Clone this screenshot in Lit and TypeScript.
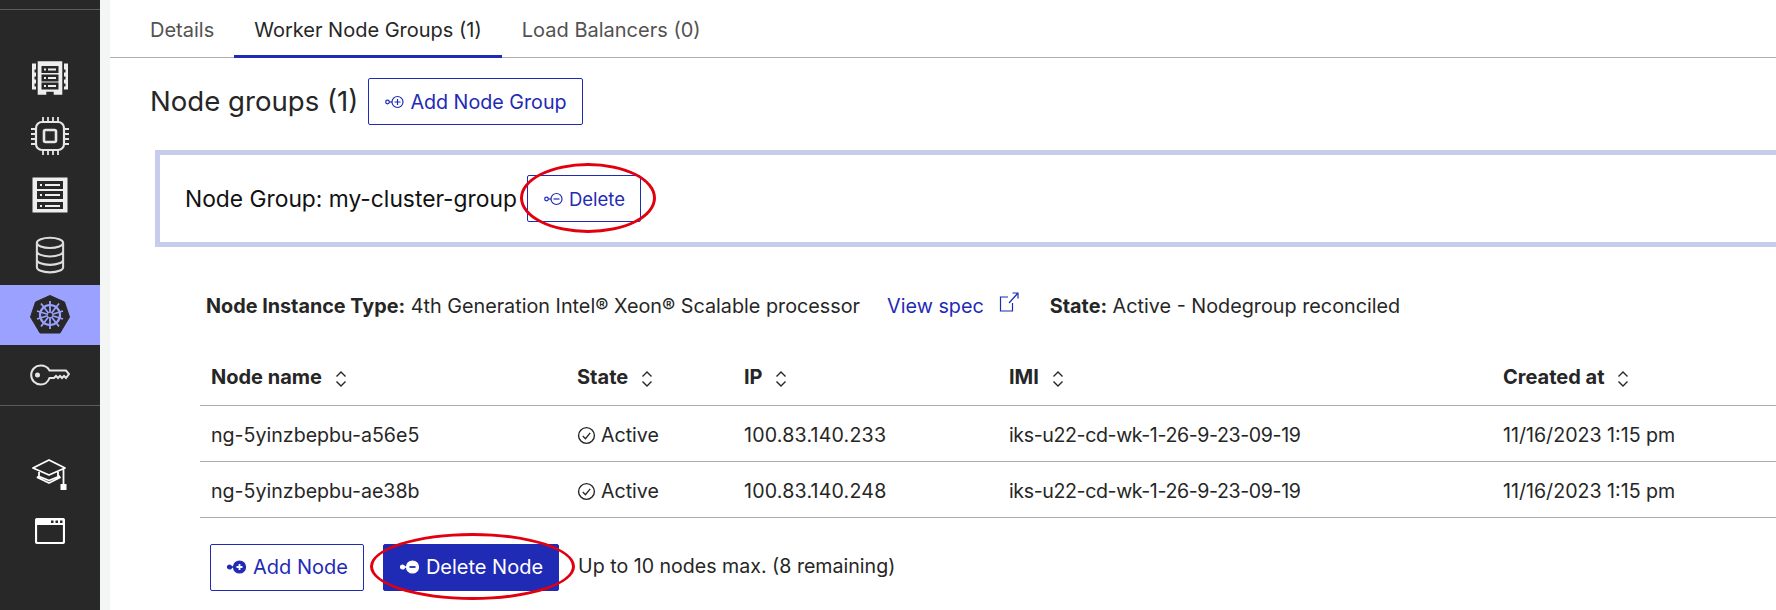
import { LitElement, html, css, svg } from 'lit';
import { customElement } from 'lit/decorators.js';

const sortIcon = html`<svg class="sort" viewBox="0 0 12 18" width="12" height="18" fill="none" stroke="currentColor" stroke-width="1.4">
	<path d="M1.500 6.500 6 2l4.500 4.500M1.500 11.500 6 16l4.500-4.500" />
</svg>`;

const nodeIcon = (sign: 'plus' | 'minus', solid = false) => html`<svg class="node-icon" viewBox="0 0 20 14" width="20" height="14" fill="none" stroke="currentColor" stroke-width="1.2">
	${solid
		? svg`<circle cx="2.5" cy="7" r="2" fill="currentColor" /><path d="M4 7h3" stroke-width="1.6" />
			<circle cx="12.5" cy="7" r="6" fill="currentColor" />
			<path d="M9.5 7h6${sign === 'plus' ? 'M12.5 4v6' : ''}" stroke="${sign === 'plus' ? '#fff' : '#1f2bb5'}" stroke-width="1.8" />`
		: svg`<circle cx="2.5" cy="7" r="1.8" /><path d="M4.3 7h2.7" />
			<circle cx="12.5" cy="7" r="5.5" />
			<path d="M9.5 7h6${sign === 'plus' ? 'M12.5 4v6' : ''}" />`}
</svg>`;

const rackIcon = html`<svg viewBox="0 0 36 34" width="36" height="34" fill="none" stroke="#eee">
	<path d="M0 2.500h4v6H2.500v3H4v4H2.500v3H4v4H2.500v3H4v3H0zM32 2.500h4v26h-4v-3h1.500v-3H32v-4h1.500v-3H32v-4h1.500v-3H32z" fill="#eee" stroke="none" />
	<path d="M7 1.500h22v31h-6v-3H13v3H7z" stroke-width="2.600" fill="#eee" />
	<path d="M9.500 5h17v7h-17zM9.500 13.500h17v7h-17zM9.500 21.500h17v7h-17z" fill="#282828" stroke="none" />
	<path d="M12 8.500h2M16 8.500h8M12 17h2M16 17h8M12 25h2M16 25h8" stroke-width="2" />
</svg>`;

const chipIcon = html`<svg viewBox="0 0 40 40" width="40" height="40" fill="none" stroke="#e6e6e6" stroke-width="1.8">
	<rect x="6" y="6" width="28" height="28" rx="6" stroke-width="2.2" />
	<rect x="14" y="14" width="12" height="12" rx="1.5" stroke-width="2.6" />
	<path d="M13 1v5M18 1v5M23 1v5M28 1v5M13 34v5M18 34v5M23 34v5M28 34v5M1 13h5M1 18h5M1 23h5M1 28h5M34 13h5M34 18h5M34 23h5M34 28h5" />
</svg>`;

const serverIcon = html`<svg viewBox="0 0 36 36" width="36" height="36" fill="#eee">
	<rect x="0.5" y="0.5" width="35" height="35" />
	<g fill="#282828">
		<rect x="5" y="4" width="26" height="8" />
		<rect x="5" y="14" width="26" height="8" />
		<rect x="5" y="25" width="26" height="7" />
	</g>
	<path d="M8 7h2v2H8zM13 7h15v2H13zM8 17h2v2H8zM13 17h15v2H13zM8 28h2v2H8zM13 28h15v2H13z" />
</svg>`;

const dbIcon = html`<svg viewBox="0 0 32 40" width="30" height="38" fill="none" stroke="#ddd" stroke-width="2.2">
	<ellipse cx="16" cy="7" rx="14" ry="5.5" />
	<path d="M2 7v26c0 3 6 5.500 14 5.500S30 36 30 33V7M2 16c0 3 6 5.500 14 5.500S30 19 30 16M2 25c0 3 6 5.500 14 5.500S30 28 30 25" />
</svg>`;

const kubeIcon = html`<svg viewBox="0 0 40 40" width="40" height="40">
	<path d="M20 0.500 34.500 7 39.500 22 30 38H10L0.500 22 5.500 7z" fill="#282828" stroke="#282828" stroke-linejoin="round" stroke-width="1" />
	<g fill="none" stroke="#9aa1ff" stroke-width="1.8">
		<circle cx="20" cy="20" r="10" stroke-width="2.2" />
		<path d="M20 6v28M7 16l26 8M33 16 7 24M11 8.500l18 23M29 8.500l-18 23" />
	</g>
	<circle cx="20" cy="20" r="2.2" fill="#282828" />
</svg>`;

const keyIcon = html`<svg viewBox="0 0 40 22" width="40" height="22" fill="none" stroke="#e6e6e6" stroke-width="2">
	<path d="M19.500 6.500H36l3 3.500-3 4-2-2-2 2-2-2-2 2-2-2-2 2h-4.500C18 18 14.500 20.500 10.500 20.500 5.500 20.500 1.200 16.500 1.200 11S5.500 1.500 10.500 1.500c4 0 7.500 2 9 5z" />
	<circle cx="7.500" cy="11" r="2.500" fill="#e6e6e6" stroke="none" />
</svg>`;

const capIcon = html`<svg viewBox="0 0 36 32" width="36" height="32" fill="none" stroke="#fff" stroke-width="1.800">
	<path d="M17 1 1 9l16 7 16-7zM31.500 9.500V26" stroke-linejoin="round" />
	<path d="M7 13v4l-1.500 1.500L17 24l11-5.500L26 17v-4M6 17l11 4.500L28 17" stroke-linejoin="round" />
	<rect x="28.500" y="25" width="6" height="6" rx="0.500" fill="#fff" stroke="none" />
</svg>`;

const windowIcon = html`<svg viewBox="0 0 30 26" width="30" height="26">
	<rect x="1" y="1" width="28" height="24" rx="1.500" fill="none" stroke="#fff" stroke-width="2.200" />
	<path d="M1 1h28v6H1z" fill="#fff" />
	<path d="M16 2.500h2.500V5H16zM20.500 2.500H23V5h-2.500zM25 2.500h2.500V5H25z" fill="#282828" />
</svg>`;

const checkIcon = html`<svg class="check" viewBox="0 0 18 18" width="19" height="19" fill="none" stroke="currentColor" stroke-width="1.300">
	<circle cx="9" cy="9" r="7.500" />
	<path d="M5.500 9.500 8 12l4.500-5.500" />
</svg>`;

const externalIcon = html`<svg class="ext" viewBox="0 0 20 20" width="20" height="20" fill="none" stroke="#1f2bb5" stroke-width="1.200">
	<path d="M9 5H1.500v14h12v-8M10 11 19 1M13.500 1H19v5.500" />
</svg>`;

const nodes = [
	{ name: 'ng-5yinzbepbu-a56e5', ip: '100.83.140.233' },
	{ name: 'ng-5yinzbepbu-ae38b', ip: '100.83.140.248' }
];

@customElement('app-root')
export class AppRoot extends LitElement {
	static styles = css`
		:host {
			display: flex;
			width: 1776px;
			height: 610px;
			overflow: hidden;
			background: #fff;
			color: #262626;
			font-family: Inter, 'Noto Sans', sans-serif;
			font-size: 19.600px;
		}
		.sidebar {
			flex: none;
			width: 100px;
			box-sizing: border-box;
			background: #282828;
			display: flex;
			flex-direction: column;
			align-items: stretch;
			padding-top: 9px;
		}
		.sidebar hr {
			margin: 0;
			border: 0;
			height: 1px;
			background: #5c5c5c;
		}
		.nav {
			height: 60px;
			display: flex;
			align-items: center;
			justify-content: center;
		}
		.nav.tight {
			height: 58px;
		}
		.nav.active {
			background: #9aa1ff;
		}
		.nav-main {
			margin-top: 39px;
		}
		.nav-bottom {
			margin-top: 41px;
		}
		.nav-bottom .nav {
			height: 56px;
		}
		.strip {
			flex: none;
			width: 10px;
			background: #f4f5f5;
		}
		main {
			flex: 1;
			min-width: 0;
		}
		.tabs {
			display: flex;
			height: 58px;
			box-sizing: border-box;
			padding-left: 20px;
			border-bottom: 1px solid #aeaeae;
			margin-bottom: 20px;
		}
		.tab {
			box-sizing: border-box;
			height: 58px;
			padding: 0 20px;
			line-height: 60px;
			font-size: 20px;
			color: #525252;
		}
		.tab:first-child {
			padding-right: 20px;
		}
		.tab.active {
			color: #262626;
			border-bottom: 3px solid #1f2bb5;
		}
		.heading {
			display: flex;
			align-items: center;
			gap: 10px;
			padding-left: 40px;
			height: 47px;
		}
		h2 {
			margin: -1px 0 0;
			font-size: 27.600px;
			font-weight: 400;
		}
		.btn {
			box-sizing: border-box;
			height: 47px;
			display: inline-flex;
			align-items: center;
			gap: 5px;
			padding: 0 15px 0 16px;
			border: 1px solid #1f2bb5;
			border-radius: 2px;
			background: #fff;
			color: #1f2bb5;
			font: inherit;
			font-size: 19.700px;
		}
		.btn.primary {
			background: #1f2bb5;
			color: #fff;
		}
		.group {
			position: relative;
			margin: 25px 0 0 45px;
			height: 97px;
			box-sizing: border-box;
			border: 5px solid #c7cbec;
			border-right: 0;
			padding-left: 25px;
			display: flex;
			align-items: center;
			gap: 10px;
			font-size: 22.800px;
			color: #111;
		}
		.group .btn {
			font-size: 18.500px;
		}
		.info {
			display: flex;
			align-items: center;
			height: 24px;
			margin: 47px 0 0 96px;
			font-size: 19.800px;
			white-space: nowrap;
		}
		.info b {
			font-weight: 700;
		}
		.info .link {
			color: #1f2bb5;
			margin: 0 15px 0 27px;
		}
		.info .ext {
			margin: -8px 31px 0 0;
		}
		table {
			border-collapse: collapse;
			table-layout: fixed;
			width: 1576px;
			margin: 29px 0 0 90px;
		}
		th,
		td {
			padding: 3px 0 0 11px;
			text-align: left;
			border-bottom: 1px solid #aeaeae;
			height: 56px;
			box-sizing: border-box;
			white-space: nowrap;
		}
		th {
			font-weight: 700;
			font-size: 20px;
			height: 58px;
		}
		.sort {
			vertical-align: -4px;
			margin-left: 8px;
		}
		.check {
			vertical-align: -3px;
			margin-right: 5px;
		}
		.ip {
			letter-spacing: 0.2px;
		}
		.imi {
			letter-spacing: -0.4px;
		}
		.actions {
			position: relative;
			display: flex;
			align-items: center;
			margin: 26px 0 0 100px;
			gap: 19px;
		}
		.actions .btn {
			font-size: 20px;
			gap: 6px;
		}
		.actions .note {
			margin-top: -2px;
		}
		.ring {
			position: absolute;
			box-sizing: border-box;
			border: 3px solid #e2000f;
			border-radius: 50%;
			pointer-events: none;
		}
		.ring-group {
			left: 360px;
			top: 8px;
			width: 136px;
			height: 70px;
		}
		.ring-node {
			left: 160px;
			top: -11px;
			width: 205px;
			height: 67px;
		}
	`;

	render() {
		return html`
			<nav class="sidebar">
				<hr />
				<div class="nav-main">
					<div class="nav tight">${rackIcon}</div>
					<div class="nav tight">${chipIcon}</div>
					<div class="nav">${serverIcon}</div>
					<div class="nav">${dbIcon}</div>
					<div class="nav active">${kubeIcon}</div>
					<div class="nav">${keyIcon}</div>
				</div>
				<hr />
				<div class="nav-bottom">
					<div class="nav">${capIcon}</div>
					<div class="nav">${windowIcon}</div>
				</div>
			</nav>
			<div class="strip"></div>
			<main>
				<div class="tabs">
					<div class="tab">Details</div>
					<div class="tab active">Worker Node Groups (1)</div>
					<div class="tab">Load Balancers (0)</div>
				</div>
				<div class="heading">
					<h2>Node groups (1)</h2>
					<button class="btn">${nodeIcon('plus')} Add Node Group</button>
				</div>
				<div class="group">
					<span>Node Group: my-cluster-group</span>
					<button class="btn">${nodeIcon('minus')} Delete</button>
					<div class="ring ring-group"></div>
				</div>
				<div class="info">
					<span><b>Node Instance Type:</b> 4th Generation Intel® Xeon® Scalable processor</span>
					<span class="link">View spec</span>
					${externalIcon}
					<span><b>State:</b> Active - Nodegroup reconciled</span>
				</div>
				<table>
					<colgroup>
						<col style="width:366px" />
						<col style="width:167px" />
						<col style="width:265px" />
						<col style="width:494px" />
						<col />
					</colgroup>
					<thead>
						<tr>
							<th>Node name ${sortIcon}</th>
							<th>State ${sortIcon}</th>
							<th>IP ${sortIcon}</th>
							<th>IMI ${sortIcon}</th>
							<th>Created at ${sortIcon}</th>
						</tr>
					</thead>
					<tbody>
						${nodes.map(
							(node) => html`<tr>
								<td>${node.name}</td>
								<td>${checkIcon}Active</td>
								<td class="ip">${node.ip}</td>
								<td class="imi">iks-u22-cd-wk-1-26-9-23-09-19</td>
								<td>11/16/2023 1:15 pm</td>
							</tr>`
						)}
					</tbody>
				</table>
				<div class="actions">
					<button class="btn">${nodeIcon('plus', true)} Add Node</button>
					<button class="btn primary">${nodeIcon('minus', true)} Delete Node</button>
					<span class="note">Up to 10 nodes max. (8 remaining)</span>
					<div class="ring ring-node"></div>
				</div>
			</main>
		`;
	}
}
